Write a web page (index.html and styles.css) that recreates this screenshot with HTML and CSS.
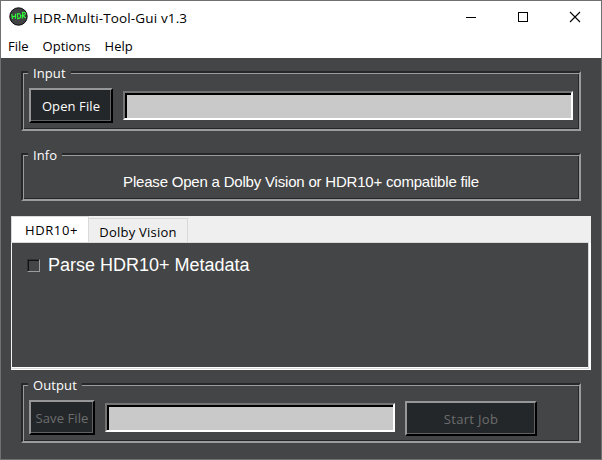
FILE: index.html
```html
<!DOCTYPE html>
<html lang="en">
<head>
<meta charset="utf-8">
<title>HDR-Multi-Tool-Gui v1.3</title>
<link rel="stylesheet" href="styles.css">
</head>
<body>
<div class="window">
  <header class="titlebar">
    <svg class="logo" width="20" height="20" viewBox="0 0 20 20">
      <circle cx="9.500" cy="9.500" r="8.700" fill="#414244" stroke="#080808" stroke-width="1"/>
      <path d="M2.800 7l.7 5M6.500 6.800v5M3 10l3.500-.9M8.300 6.500l.6 5.300q3.200-.8 2.700-3.500-.5-2-3.300-1.800M13.300 11.800l.3-6.300q3-.6 2.800 1.200-.2 1.500-2.800 1.700l3.200 2.600" fill="none" stroke="#2cff35" stroke-width="1.100"/>
    </svg>
    <h1 class="title">HDR-Multi-Tool-Gui v1.3</h1>
    <div class="controls">
      <svg width="12" height="12" shape-rendering="crispEdges"><path d="M1 6.500h10" stroke="#000"/></svg>
      <svg width="12" height="12" shape-rendering="crispEdges"><path d="M1.500 1.500h9v9h-9z" fill="none" stroke="#000"/></svg>
      <svg width="12" height="12"><path d="M1 1l10 10M11 1L1 11" stroke="#000" stroke-width="1.100"/></svg>
    </div>
  </header>
  <nav class="menu"><span>File</span><span>Options</span><span>Help</span></nav>
  <main class="content">
    <section class="group input">
      <div class="legend">Input</div>
      <div class="row">
        <button class="button open">Open File</button>
        <div class="entry"></div>
      </div>
    </section>
    <section class="group info">
      <div class="legend">Info</div>
      <p class="message">Please Open a Dolby Vision or HDR10+ compatible file</p>
    </section>
    <section class="notebook">
      <div class="tabs">
        <div class="tab active">HDR10+</div>
        <div class="tab">Dolby Vision</div>
      </div>
      <div class="pane">
        <div class="option"><span class="check"></span><span>Parse HDR10+ Metadata</span></div>
      </div>
    </section>
    <section class="group output">
      <div class="legend">Output</div>
      <div class="row">
        <button class="button save" disabled>Save File</button>
        <div class="entry"></div>
        <button class="button start" disabled>Start Job</button>
      </div>
    </section>
  </main>
</div>
</body>
</html>
```
FILE: styles.css
```css
* { box-sizing: border-box; }
body { margin: 0; font-family: "Open Sans", "Noto Sans", sans-serif; font-size: 13px; color: #000; }
.window { width: 602px; height: 460px; border: 1px solid #707070; background: #444546; overflow: hidden; white-space: nowrap; }
.titlebar { height: 32px; background: #fff; display: flex; align-items: center; padding-left: 8px; }
.logo { flex: none; }
.title { flex: 1; margin: 2px 0 0 4px; font-size: 13.5px; font-weight: 400; line-height: 20px; letter-spacing: 0.14px; }
.controls { display: flex; gap: 40px; padding-right: 20px; }
.controls svg { display: block; }
.menu { height: 25px; background: #fff; display: flex; gap: 14px; padding-left: 7px; line-height: 26px; }
.content { padding: 13px 20px 0; }
.group { position: relative; width: 560px; height: 60px; border: 2px solid #262729; border-right-color: #9b9c9d; border-bottom-color: #9b9c9d; box-shadow: inset 1px 1px #9b9c9d, inset -1px -1px #262729; }
.legend { position: absolute; left: 5px; top: -10px; height: 20px; line-height: 20px; padding: 0 5px; background: #444546; color: #fff; letter-spacing: 0.1px; }
.info { height: 48px; margin-top: 22px; }
.row { display: flex; align-items: flex-start; padding: 15px 0 0 6px; }
.button { height: 35px; padding: 0; border: 2px solid #969798; border-right-color: #000; border-bottom-color: #000; border-radius: 0; box-shadow: inset -1px -1px #606162; background: #23272a; color: #fff; font: inherit; line-height: 30px; letter-spacing: 0.1px; }
.button:disabled { color: #6d6d6d; }
.open { width: 84px; }
.save { width: 66px; }
.start { width: 132px; margin-top: 1px; letter-spacing: 0.3px; }
.entry { height: 29px; width: 450px; margin: 3px 0 0 10px; border: 2px solid #747474; border-right-color: #fff; border-bottom-color: #fff; box-shadow: inset 2px 2px #000; background: #c9c9c9; }
.output .entry { width: 290px; margin-right: 10px; }
.message { margin: 17px 0 0; text-align: center; font: 15px/20px "Liberation Sans", sans-serif; letter-spacing: -0.2px; color: #fff; }
.notebook { width: 580px; height: 154px; margin: 15px 0 13px -10px; background: #efefef; display: flex; flex-direction: column; }
.tabs { height: 26px; display: flex; align-items: flex-end; }
.tab { width: 99px; height: 24px; border: 1px solid #d9d9d9; border-left: 0; border-bottom: 0; text-align: center; line-height: 26px; letter-spacing: 0.22px; }
.tab.active { width: 78px; height: 26px; border-left: 1px solid #d9d9d9; background: #fff; line-height: 26px; padding-left: 3px; letter-spacing: 0.6px; }
.pane { flex: 1; margin-right: 2px; margin-bottom: 1px; border: 1px solid #d9d9d9; border-left-color: #f4f4f4; background: #444546; box-shadow: inset 0 -1px #fff, 1px 0 #fff, 0 1px #fff, 2px 1px #fff; }
.option { display: flex; align-items: center; gap: 8px; padding: 10px 0 0 15px; height: 34px; font: 18px/22px "Liberation Sans", sans-serif; color: #fff; }
.check { width: 13px; height: 13px; border: 1px solid #303132; border-right-color: #9b9c9d; border-bottom-color: #9b9c9d; box-shadow: inset 1px 1px #111; }
```
